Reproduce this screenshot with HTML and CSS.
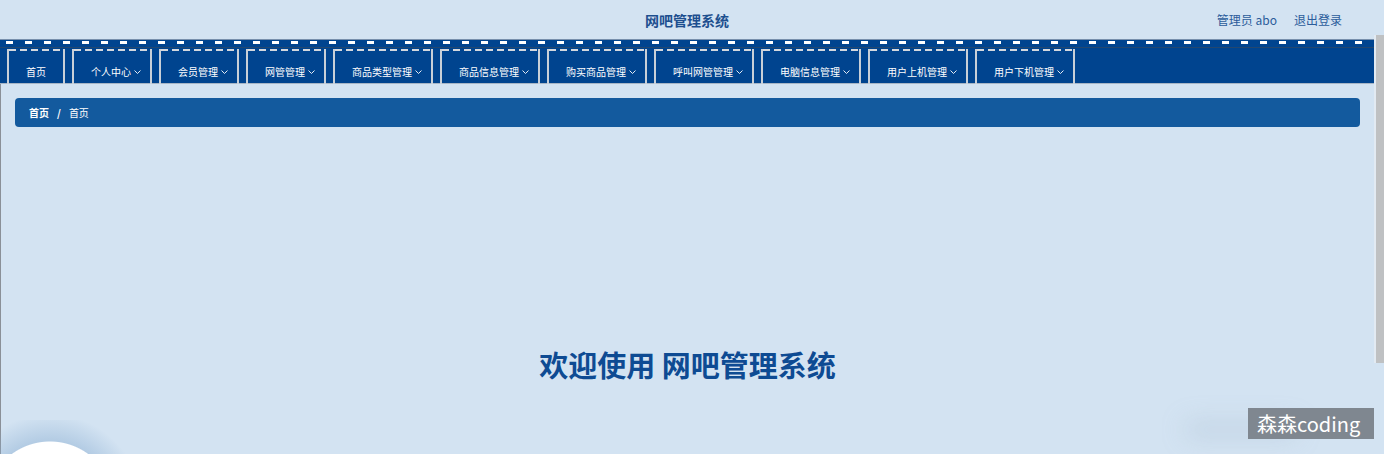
FILE: index.html
```html
<!DOCTYPE html>
<html lang="zh-CN">
<head>
<meta charset="utf-8">
<title>网吧管理系统</title>
<link rel="stylesheet" href="styles.css">
</head>
<body>
<div class="page">
  <div class="app">
    <header class="header">
      <div class="header-side"></div>
      <h1 class="title">网吧管理系统</h1>
      <div class="header-side header-right">
        <span class="user">管理员 abo</span>
        <a class="logout">退出登录</a>
      </div>
    </header>
    <nav class="nav">
      <div class="tab plain">首页</div>
      <div class="tab">个人中心<svg class="arrow" viewBox="0 0 7 4"><polyline points="0.5,0.5 3.5,3.5 6.5,0.5"/></svg></div>
      <div class="tab">会员管理<svg class="arrow" viewBox="0 0 7 4"><polyline points="0.5,0.5 3.5,3.5 6.5,0.5"/></svg></div>
      <div class="tab">网管管理<svg class="arrow" viewBox="0 0 7 4"><polyline points="0.5,0.5 3.5,3.5 6.5,0.5"/></svg></div>
      <div class="tab">商品类型管理<svg class="arrow" viewBox="0 0 7 4"><polyline points="0.5,0.5 3.5,3.5 6.5,0.5"/></svg></div>
      <div class="tab">商品信息管理<svg class="arrow" viewBox="0 0 7 4"><polyline points="0.5,0.5 3.5,3.5 6.5,0.5"/></svg></div>
      <div class="tab">购买商品管理<svg class="arrow" viewBox="0 0 7 4"><polyline points="0.5,0.5 3.5,3.5 6.5,0.5"/></svg></div>
      <div class="tab">呼叫网管管理<svg class="arrow" viewBox="0 0 7 4"><polyline points="0.5,0.5 3.5,3.5 6.5,0.5"/></svg></div>
      <div class="tab">电脑信息管理<svg class="arrow" viewBox="0 0 7 4"><polyline points="0.5,0.5 3.5,3.5 6.5,0.5"/></svg></div>
      <div class="tab">用户上机管理<svg class="arrow" viewBox="0 0 7 4"><polyline points="0.5,0.5 3.5,3.5 6.5,0.5"/></svg></div>
      <div class="tab">用户下机管理<svg class="arrow" viewBox="0 0 7 4"><polyline points="0.5,0.5 3.5,3.5 6.5,0.5"/></svg></div>
    </nav>
    <main class="content">
      <div class="breadcrumb">
        <span class="crumb-first">首页</span>
        <span class="crumb-sep">/</span>
        <span class="crumb-last">首页</span>
      </div>
      <h2 class="welcome">欢迎使用 网吧管理系统</h2>
    </main>
  </div>
  <div class="rail">
    <div class="rail-bar"></div>
  </div>
</div>
<div class="bubble"></div>
<div class="watermark">森森coding</div>
</body>
</html>
```

FILE: styles.css
```css
html, body {
  margin: 0;
  padding: 0;
}

body {
  width: 1384px;
  height: 454px;
  overflow: hidden;
  background: #d3e3f2;
  font-family: "Noto Sans CJK SC", "Microsoft YaHei", "Liberation Sans", sans-serif;
  position: relative;
}

.page {
  display: flex;
  height: 454px;
  overflow: hidden;
}

.app {
  flex: 0 0 1374px;
  width: 1374px;
  display: flex;
  flex-direction: column;
}

.header {
  height: 39px;
  display: grid;
  grid-template-columns: 1fr auto 1fr;
  align-items: center;
}

.title {
  margin: 0;
  font-size: 14px;
  font-weight: 700;
  color: #1d4f8f;
  line-height: 20px;
}

.header-right {
  display: flex;
  justify-content: flex-end;
  gap: 17px;
  padding-right: 32px;
  font-size: 12px;
  color: #2b5c9b;
  line-height: 16px;
}

.logout {
  color: #2b5c9b;
  text-decoration: none;
}

.nav {
  height: 45px;
  box-sizing: border-box;
  border-top: 1px solid #7890ad;
  border-bottom: 1px solid #a8b6c6;
  padding: 9px 0 0 7px;
  display: flex;
  gap: 7px;
  background:
    repeating-linear-gradient(90deg, #ffffff 0 7px, transparent 7px 19px) 6px 1px / 100% 3px no-repeat,
    linear-gradient(#23476f, #23476f) 0 7px / 100% 1px no-repeat,
    #00448f;
}

.tab {
  height: 35px;
  box-sizing: border-box;
  border-left: 2px solid #c9d0d8;
  border-right: 2px solid #c9d0d8;
  padding: 16px 9px 0 17px;
  font-size: 10px;
  line-height: 14px;
  color: #ffffff;
  display: flex;
  align-items: flex-start;
  white-space: nowrap;
  background:
    repeating-linear-gradient(90deg, #d4d8de 0 7px, transparent 7px 11px) 0 0 / 100% 2px no-repeat;
}

.tab.plain {
  padding-right: 17px;
}

.arrow {
  width: 7px;
  height: 4px;
  margin: 5px 0 0 3px;
  fill: none;
  stroke: #ffffff;
  stroke-width: 0.9;
}

.content {
  flex: 1;
  border-left: 1px solid #8a9098;
  padding: 14px 14px 0 14px;
  display: flex;
  flex-direction: column;
}

.breadcrumb {
  height: 29px;
  border-radius: 4px;
  background: #135a9e;
  display: flex;
  align-items: center;
  padding-left: 14px;
  font-size: 10px;
  color: #ffffff;
}

.crumb-first {
  font-weight: 700;
}

.crumb-sep {
  margin: 0 8px;
  font-weight: 700;
}

.crumb-last {
  font-weight: 400;
}

.welcome {
  margin: 218px 0 0 0;
  text-align: center;
  font-size: 29px;
  line-height: 38px;
  font-weight: 700;
  color: #0e4b93;
}

.rail {
  flex: 0 0 10px;
  padding-top: 35px;
}

.rail-bar {
  height: 328px;
  border-left: 2px solid #e2eaf2;
  background: #bfc1c3;
}

.bubble {
  position: absolute;
  left: -40px;
  top: 420px;
  width: 180px;
  height: 34px;
  overflow: hidden;
  background: radial-gradient(circle 65px at 90px 86px, #ffffff 0 64px, rgba(140, 175, 210, 0.45) 65px, rgba(211, 227, 242, 0) 92px);
}

.watermark {
  position: absolute;
  left: 1248px;
  top: 408px;
  width: 126px;
  height: 31px;
  box-sizing: border-box;
  padding-left: 9px;
  background: #7f8790;
  color: #ffffff;
  font-size: 20px;
  line-height: 31px;
  box-shadow: -70px 6px 24px -8px rgba(160, 180, 200, 0.35);
}
```
